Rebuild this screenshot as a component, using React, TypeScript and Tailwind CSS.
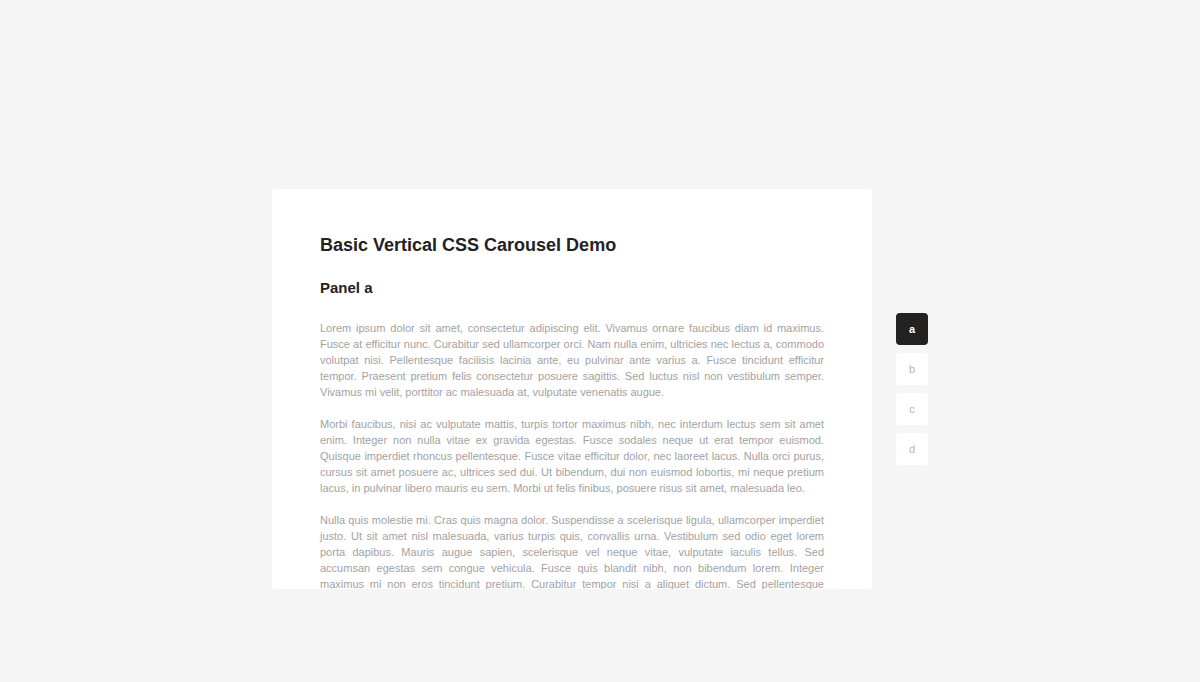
import React from "react";

const paragraphs = [
  "Lorem ipsum dolor sit amet, consectetur adipiscing elit. Vivamus ornare faucibus diam id maximus. Fusce at efficitur nunc. Curabitur sed ullamcorper orci. Nam nulla enim, ultricies nec lectus a, commodo volutpat nisi. Pellentesque facilisis lacinia ante, eu pulvinar ante varius a. Fusce tincidunt efficitur tempor. Praesent pretium felis consectetur posuere sagittis. Sed luctus nisl non vestibulum semper. Vivamus mi velit, porttitor ac malesuada at, vulputate venenatis augue.",
  "Morbi faucibus, nisi ac vulputate mattis, turpis tortor maximus nibh, nec interdum lectus sem sit amet enim. Integer non nulla vitae ex gravida egestas. Fusce sodales neque ut erat tempor euismod. Quisque imperdiet rhoncus pellentesque. Fusce vitae efficitur dolor, nec laoreet lacus. Nulla orci purus, cursus sit amet posuere ac, ultrices sed dui. Ut bibendum, dui non euismod lobortis, mi neque pretium lacus, in pulvinar libero mauris eu sem. Morbi ut felis finibus, posuere risus sit amet, malesuada leo.",
  "Nulla quis molestie mi. Cras quis magna dolor. Suspendisse a scelerisque ligula, ullamcorper imperdiet justo. Ut sit amet nisl malesuada, varius turpis quis, convallis urna. Vestibulum sed odio eget lorem porta dapibus. Mauris augue sapien, scelerisque vel neque vitae, vulputate iaculis tellus. Sed accumsan egestas sem congue vehicula. Fusce quis blandit nibh, non bibendum lorem. Integer maximus mi non eros tincidunt pretium. Curabitur tempor nisi a aliquet dictum. Sed pellentesque ultrices dolor, et egestas massa ultrices nec. Vivamus quis lorem ut leo feugiat tincidunt.",
];

const panels = ["a", "b", "c", "d"];

export default function App() {
  const active = "a";

  return (
    <div className="min-h-[682px] bg-[#f5f5f5] pt-[189px] font-['Liberation_Sans',Arial,sans-serif]">
      <div className="flex items-center justify-center gap-6">
        {/* Carousel panel */}
        <div className="h-[400px] w-[600px] overflow-hidden rounded-[4px] bg-white px-12 pt-[44px]">
          <h1 className="text-[18px] font-bold leading-[24px] text-[#222]">
            Basic Vertical CSS Carousel Demo
          </h1>
          <h2 className="mt-[21px] text-[15px] font-bold leading-[20px] text-[#222]">
            Panel {active}
          </h2>
          <div className="mt-[22px] flex flex-col gap-4">
            {paragraphs.map((p, i) => (
              <p key={i} className="text-justify text-[11px] leading-[16px] text-[#a2a2a2]">
                {p}
              </p>
            ))}
          </div>
        </div>

        {/* Panel nav */}
        <div className="flex flex-col gap-2">
          {panels.map((p) => (
            <button
              key={p}
              className={
                p === active
                  ? "flex h-8 w-8 items-center justify-center rounded-[4px] bg-[#222] text-[11px] font-bold text-white"
                  : "flex h-8 w-8 items-center justify-center rounded-[4px] bg-white text-[11px] text-[#b5b5b5]"
              }
            >
              {p}
            </button>
          ))}
        </div>
      </div>
    </div>
  );
}
